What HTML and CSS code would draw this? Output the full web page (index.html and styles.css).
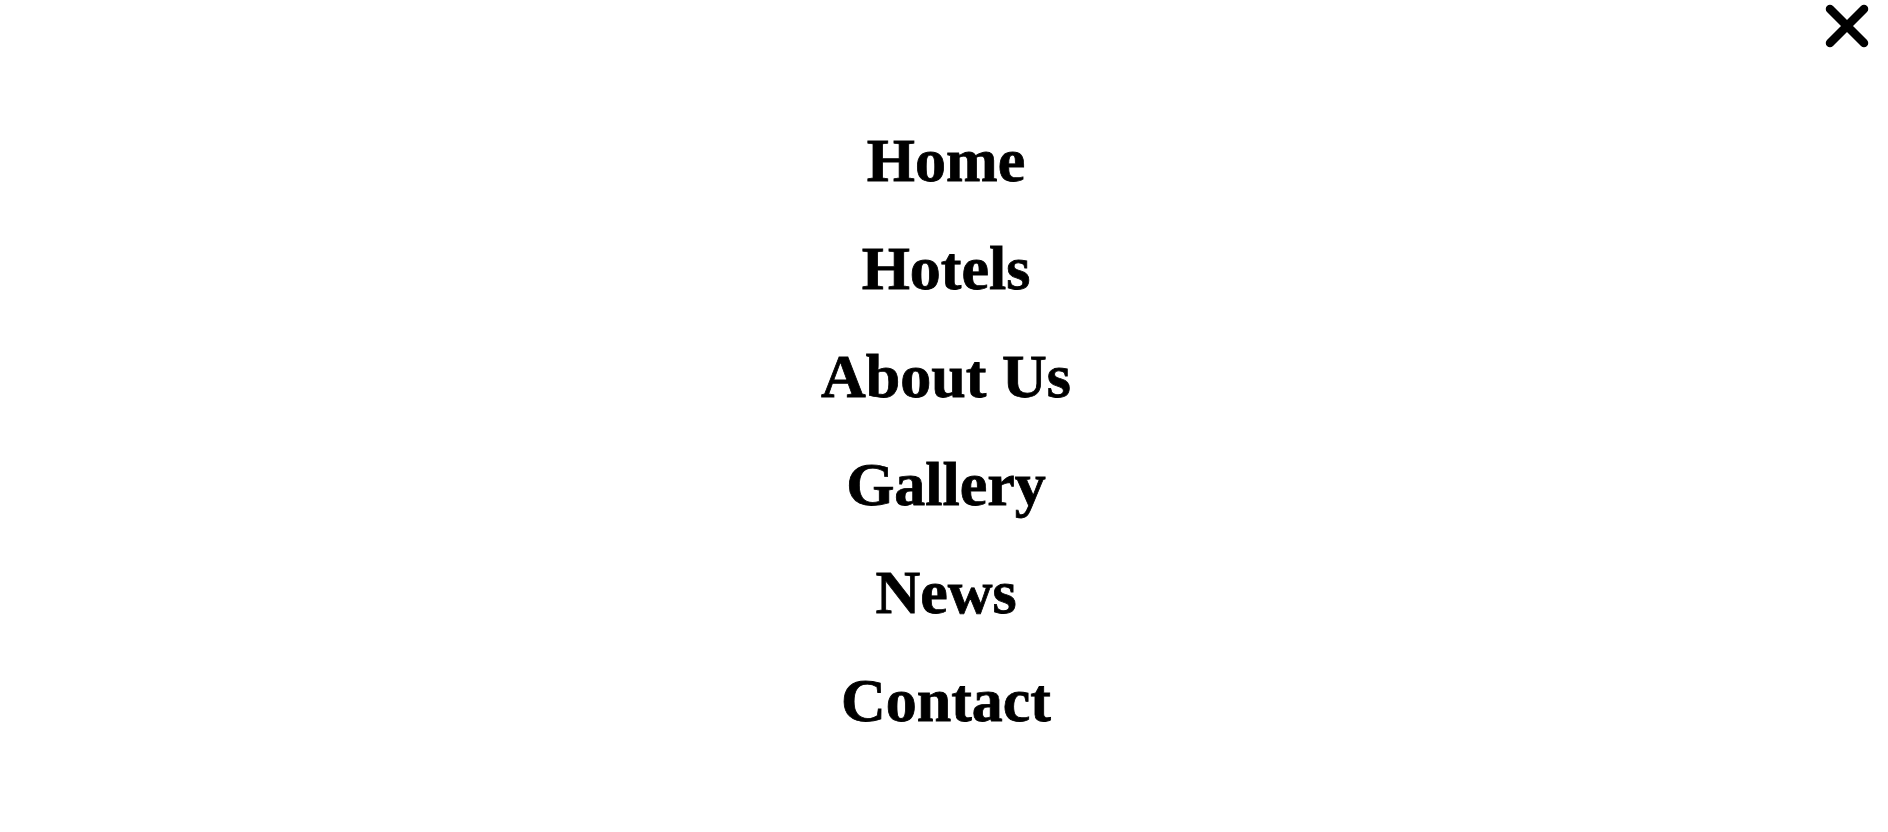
FILE: index.html
```html
<!DOCTYPE html>
<html lang="en">
<head>
<meta charset="utf-8">
<title>Menu</title>
<link rel="stylesheet" href="styles.css">
</head>
<body>
<div class="overlay">
  <div class="topbar">
    <button class="close" aria-label="Close">
      <svg width="44" height="44" viewBox="0 0 44 44"><path d="M5 5 L39 39 M39 5 L5 39" stroke="#000" stroke-width="8.5" stroke-linecap="round" fill="none"/></svg>
    </button>
  </div>
  <nav class="menu">
    <a href="#">Home</a>
    <a href="#">Hotels</a>
    <a href="#">About Us</a>
    <a href="#">Gallery</a>
    <a href="#">News</a>
    <a href="#">Contact</a>
  </nav>
</div>
</body>
</html>
```
FILE: styles.css
```css
html, body {
  margin: 0;
  padding: 0;
  background: #fff;
}
.overlay {
  width: 1888px;
  height: 832px;
  display: flex;
  flex-direction: column;
}
.topbar {
  display: flex;
  justify-content: flex-end;
  padding: 4px 19px 0 0;
}
.close {
  border: 0;
  background: none;
  padding: 0;
  width: 44px;
  height: 44px;
  cursor: pointer;
}
.close svg { display: block; }
.menu {
  display: flex;
  flex-direction: column;
  align-items: center;
  margin-top: 58px;
  padding-left: 4px;
}
.menu a {
  font-family: "Liberation Serif", "Times New Roman", serif;
  font-weight: 700;
  font-size: 62px;
  line-height: 108px;
  color: #000;
  text-decoration: none;
  -webkit-text-stroke: 0.8px #000;
}
```
